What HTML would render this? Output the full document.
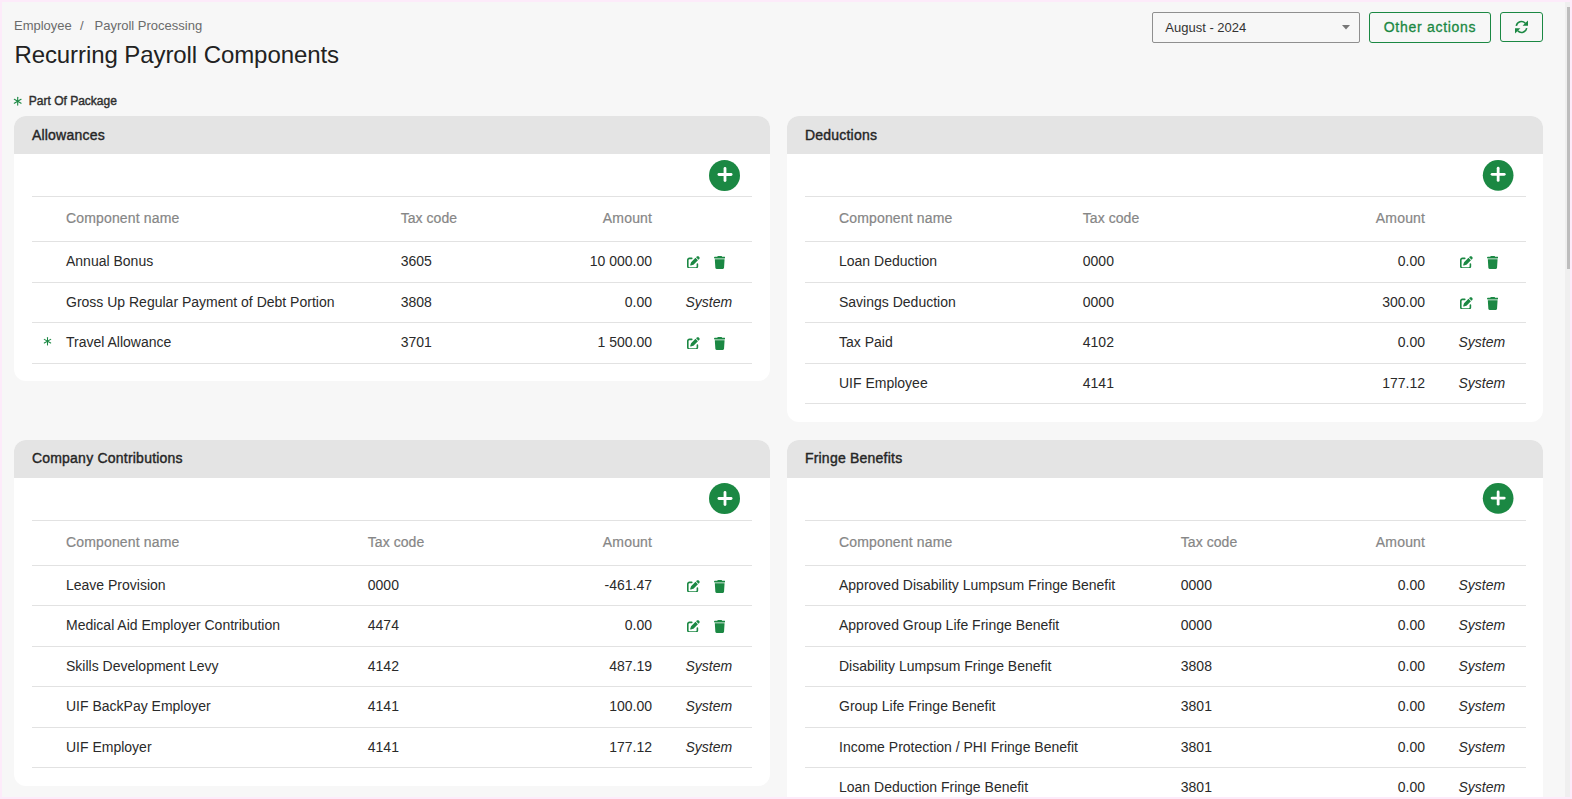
<!DOCTYPE html><html><head><meta charset="utf-8"><style>
html,body{margin:0;padding:0;}
body{width:1572px;height:799px;overflow:hidden;background:#fdebfa;position:relative;font-family:"Liberation Sans",sans-serif;}
.vp{position:absolute;left:2px;top:2px;width:1568px;height:795px;background:#f7f7f7;overflow:hidden;}
.abs{position:absolute;left:0;top:0;width:1572px;height:799px;}
.t{position:absolute;white-space:nowrap;}
.i{position:absolute;}
.card{position:absolute;background:#fff;border-radius:12px;overflow:hidden;}
.ch{position:absolute;background:#e4e4e4;border-radius:12px 12px 0 0;}
.hl{position:absolute;height:1px;}
.pb{position:absolute;border-radius:50%;background:#1b8843;}
</style></head><body><div class="vp"><div class="abs" style="left:-2px;top:-2px">
<div class="t" style="top:15.90px;font-size:13px;line-height:20px;color:#6b6b6b;left:14.00px;">Employee</div>
<div class="t" style="top:15.90px;font-size:13px;line-height:20px;color:#6b6b6b;left:80.00px;">/</div>
<div class="t" style="top:15.90px;font-size:13px;line-height:20px;color:#6b6b6b;left:94.50px;">Payroll Processing</div>
<div class="t" style="top:39.58px;font-size:24px;line-height:30px;color:#222;letter-spacing:-0.08px;left:14.40px;">Recurring Payroll Components</div>
<svg class="i" style="left:0;top:0;width:1572px;height:799px;overflow:visible" viewBox="0 0 1572 799"><g stroke="#1b8843" stroke-width="1.1" stroke-linecap="round"><line x1="17.70" y1="97.30" x2="17.70" y2="105.10"/><line x1="14.32" y1="99.25" x2="21.08" y2="103.15"/><line x1="21.08" y1="99.25" x2="14.32" y2="103.15"/></g></svg>
<div class="t" style="top:90.54px;font-size:12px;line-height:20px;color:#2e2e2e;left:28.80px;-webkit-text-stroke:0.4px #2e2e2e;">Part Of Package</div>
<div style="position:absolute;left:1152px;top:12px;width:206px;height:29px;border:1px solid #8f8f8f;border-radius:2px;"></div>
<div class="t" style="top:17.60px;font-size:13px;line-height:20px;color:#333;left:1165.30px;">August - 2024</div>
<svg class="i" style="left:1342px;top:25px;width:8px;height:5px" viewBox="0 0 8 5"><path d="M0 0H8L4 4.6Z" fill="#777"/></svg>
<div style="position:absolute;left:1369px;top:12px;width:120px;height:29px;border:1px solid #1b8843;border-radius:3px;"></div>
<div class="t" style="top:17.05px;font-size:14px;line-height:20px;color:#1b8843;letter-spacing:0.72px;left:1383.70px;-webkit-text-stroke:0.3px #1b8843;">Other actions</div>
<div style="position:absolute;left:1500px;top:12px;width:41px;height:28px;border:1px solid #1b8843;border-radius:3px;"></div>
<svg class="i" style="left:1514.5px;top:21px;width:13px;height:12px;overflow:visible" viewBox="0 0 13 12"><g><path d="M1.3 4.9A5.3 5.3 0 0 1 10.2 2.1" fill="none" stroke="#1b8843" stroke-width="1.6"/><path d="M7.6 4.7H13V-0.6Z" fill="#1b8843"/></g><g transform="rotate(180 6.5 6)"><path d="M1.3 4.9A5.3 5.3 0 0 1 10.2 2.1" fill="none" stroke="#1b8843" stroke-width="1.6"/><path d="M7.6 4.7H13V-0.6Z" fill="#1b8843"/></g></svg>
<div class="card" style="left:14px;top:116px;width:756px;height:265px"></div>
<div class="ch" style="left:14px;top:116px;width:756px;height:38px"></div>
<div class="t" style="top:124.85px;font-size:14px;line-height:20px;color:#262626;letter-spacing:0.22px;left:31.90px;-webkit-text-stroke:0.4px #262626;">Allowances</div>
<svg class="i" style="left:707px;top:158px;width:36px;height:36px" viewBox="0 0 36 36"><circle cx="17.50" cy="17.50" r="15.50" fill="#1b8843"/><g stroke="#fff" stroke-width="2.8" stroke-linecap="round"><line x1="18.00" y1="10.40" x2="18.00" y2="22.60"/><line x1="11.90" y1="16.50" x2="24.10" y2="16.50"/></g></svg>
<div class="hl" style="left:32px;top:196px;width:720px;background:#e2e2e2"></div>
<div class="hl" style="left:32px;top:241px;width:720px;background:#e2e2e2"></div>
<div class="hl" style="left:32px;top:282px;width:720px;background:#e2e2e2"></div>
<div class="hl" style="left:32px;top:322px;width:720px;background:#e2e2e2"></div>
<div class="hl" style="left:32px;top:363px;width:720px;background:#e2e2e2"></div>
<div class="t" style="top:207.65px;font-size:14px;line-height:20px;color:#868686;letter-spacing:0.15px;left:66.00px;-webkit-text-stroke:0.2px #868686;">Component name</div>
<div class="t" style="top:207.65px;font-size:14px;line-height:20px;color:#868686;letter-spacing:0.05px;left:400.70px;-webkit-text-stroke:0.2px #868686;">Tax code</div>
<div class="t" style="top:207.65px;font-size:14px;line-height:20px;color:#868686;letter-spacing:0.2px;right:919.80px;-webkit-text-stroke:0.2px #868686;">Amount</div>
<div class="t" style="top:251.15px;font-size:14px;line-height:20px;color:#2a2a2a;left:66.00px;">Annual Bonus</div>
<div class="t" style="top:251.15px;font-size:14px;line-height:20px;color:#2a2a2a;left:400.70px;">3605</div>
<div class="t" style="top:251.15px;font-size:14px;line-height:20px;color:#2a2a2a;right:920.00px;">10 000.00</div>
<svg class="i" style="left:687px;top:255.5px;width:12.8px;height:12.8px" viewBox="0 0 512 512" preserveAspectRatio="none"><path fill="#1b8843" d="M471.6 21.7c-21.9-21.9-57.3-21.9-79.2 0L362.3 51.7l97.9 97.9 30.1-30.1c21.9-21.9 21.9-57.3 0-79.2L471.6 21.7zm-299.2 220c-6.1 6.1-10.8 13.6-13.5 21.9l-29.6 88.8c-2.9 8.6-.6 18.1 5.8 24.6s15.9 8.7 24.6 5.8l88.8-29.6c8.2-2.7 15.7-7.4 21.9-13.5L437.7 172.3 339.7 74.3 172.4 241.7zM96 64C43 64 0 107 0 160V416c0 53 43 96 96 96H352c53 0 96-43 96-96V320c0-17.7-14.3-32-32-32s-32 14.3-32 32v96c0 17.7-14.3 32-32 32H96c-17.7 0-32-14.3-32-32V160c0-17.7 14.3-32 32-32h96c17.7 0 32-14.3 32-32s-14.3-32-32-32H96z"/></svg>
<svg class="i" style="left:713.6px;top:255.6px;width:11.4px;height:13.0px" viewBox="0 0 448 512" preserveAspectRatio="none"><path fill="#1b8843" d="M135.2 17.7L128 32H32C14.3 32 0 46.3 0 64S14.3 96 32 96H416c17.7 0 32-14.3 32-32s-14.3-32-32-32H320l-7.2-14.3C307.4 6.8 296.3 0 284.2 0H163.8c-12.1 0-23.2 6.8-28.6 17.7zM416 128H32L53.2 467c1.6 25.3 22.6 45 47.9 45H346.9c25.3 0 46.3-19.7 47.9-45L416 128z"/></svg>
<div class="t" style="top:292.15px;font-size:14px;line-height:20px;color:#2a2a2a;left:66.00px;">Gross Up Regular Payment of Debt Portion</div>
<div class="t" style="top:292.15px;font-size:14px;line-height:20px;color:#2a2a2a;left:400.70px;">3808</div>
<div class="t" style="top:292.15px;font-size:14px;line-height:20px;color:#2a2a2a;right:920.00px;">0.00</div>
<div class="t" style="top:292.15px;font-size:14px;line-height:20px;color:#2a2a2a;font-style:italic;left:685.50px;">System</div>
<svg class="i" style="left:0;top:0;width:1572px;height:799px;overflow:visible" viewBox="0 0 1572 799"><g stroke="#1b8843" stroke-width="1.05" stroke-linecap="round"><line x1="47.50" y1="337.50" x2="47.50" y2="344.90"/><line x1="44.30" y1="339.35" x2="50.70" y2="343.05"/><line x1="50.70" y1="339.35" x2="44.30" y2="343.05"/></g></svg>
<div class="t" style="top:332.15px;font-size:14px;line-height:20px;color:#2a2a2a;left:66.00px;">Travel Allowance</div>
<div class="t" style="top:332.15px;font-size:14px;line-height:20px;color:#2a2a2a;left:400.70px;">3701</div>
<div class="t" style="top:332.15px;font-size:14px;line-height:20px;color:#2a2a2a;right:920.00px;">1 500.00</div>
<svg class="i" style="left:687px;top:336.5px;width:12.8px;height:12.8px" viewBox="0 0 512 512" preserveAspectRatio="none"><path fill="#1b8843" d="M471.6 21.7c-21.9-21.9-57.3-21.9-79.2 0L362.3 51.7l97.9 97.9 30.1-30.1c21.9-21.9 21.9-57.3 0-79.2L471.6 21.7zm-299.2 220c-6.1 6.1-10.8 13.6-13.5 21.9l-29.6 88.8c-2.9 8.6-.6 18.1 5.8 24.6s15.9 8.7 24.6 5.8l88.8-29.6c8.2-2.7 15.7-7.4 21.9-13.5L437.7 172.3 339.7 74.3 172.4 241.7zM96 64C43 64 0 107 0 160V416c0 53 43 96 96 96H352c53 0 96-43 96-96V320c0-17.7-14.3-32-32-32s-32 14.3-32 32v96c0 17.7-14.3 32-32 32H96c-17.7 0-32-14.3-32-32V160c0-17.7 14.3-32 32-32h96c17.7 0 32-14.3 32-32s-14.3-32-32-32H96z"/></svg>
<svg class="i" style="left:713.6px;top:336.6px;width:11.4px;height:13.0px" viewBox="0 0 448 512" preserveAspectRatio="none"><path fill="#1b8843" d="M135.2 17.7L128 32H32C14.3 32 0 46.3 0 64S14.3 96 32 96H416c17.7 0 32-14.3 32-32s-14.3-32-32-32H320l-7.2-14.3C307.4 6.8 296.3 0 284.2 0H163.8c-12.1 0-23.2 6.8-28.6 17.7zM416 128H32L53.2 467c1.6 25.3 22.6 45 47.9 45H346.9c25.3 0 46.3-19.7 47.9-45L416 128z"/></svg>
<div class="card" style="left:787px;top:116px;width:756px;height:305.5px"></div>
<div class="ch" style="left:787px;top:116px;width:756px;height:38px"></div>
<div class="t" style="top:124.85px;font-size:14px;line-height:20px;color:#262626;letter-spacing:0.22px;left:804.90px;-webkit-text-stroke:0.4px #262626;">Deductions</div>
<svg class="i" style="left:1480px;top:158px;width:36px;height:36px" viewBox="0 0 36 36"><circle cx="18.15" cy="17.35" r="15.35" fill="#1b8843"/><g stroke="#fff" stroke-width="2.8" stroke-linecap="round"><line x1="18.15" y1="10.25" x2="18.15" y2="22.45"/><line x1="12.05" y1="16.35" x2="24.25" y2="16.35"/></g></svg>
<div class="hl" style="left:805px;top:196px;width:721px;background:#e2e2e2"></div>
<div class="hl" style="left:805px;top:241px;width:721px;background:#e2e2e2"></div>
<div class="hl" style="left:805px;top:282px;width:721px;background:#e2e2e2"></div>
<div class="hl" style="left:805px;top:322px;width:721px;background:#e2e2e2"></div>
<div class="hl" style="left:805px;top:363px;width:721px;background:#e2e2e2"></div>
<div class="hl" style="left:805px;top:403px;width:721px;background:#e2e2e2"></div>
<div class="t" style="top:207.65px;font-size:14px;line-height:20px;color:#868686;letter-spacing:0.15px;left:839.00px;-webkit-text-stroke:0.2px #868686;">Component name</div>
<div class="t" style="top:207.65px;font-size:14px;line-height:20px;color:#868686;letter-spacing:0.05px;left:1082.80px;-webkit-text-stroke:0.2px #868686;">Tax code</div>
<div class="t" style="top:207.65px;font-size:14px;line-height:20px;color:#868686;letter-spacing:0.2px;right:146.80px;-webkit-text-stroke:0.2px #868686;">Amount</div>
<div class="t" style="top:251.15px;font-size:14px;line-height:20px;color:#2a2a2a;left:839.00px;">Loan Deduction</div>
<div class="t" style="top:251.15px;font-size:14px;line-height:20px;color:#2a2a2a;left:1082.80px;">0000</div>
<div class="t" style="top:251.15px;font-size:14px;line-height:20px;color:#2a2a2a;right:147.00px;">0.00</div>
<svg class="i" style="left:1460px;top:255.5px;width:12.8px;height:12.8px" viewBox="0 0 512 512" preserveAspectRatio="none"><path fill="#1b8843" d="M471.6 21.7c-21.9-21.9-57.3-21.9-79.2 0L362.3 51.7l97.9 97.9 30.1-30.1c21.9-21.9 21.9-57.3 0-79.2L471.6 21.7zm-299.2 220c-6.1 6.1-10.8 13.6-13.5 21.9l-29.6 88.8c-2.9 8.6-.6 18.1 5.8 24.6s15.9 8.7 24.6 5.8l88.8-29.6c8.2-2.7 15.7-7.4 21.9-13.5L437.7 172.3 339.7 74.3 172.4 241.7zM96 64C43 64 0 107 0 160V416c0 53 43 96 96 96H352c53 0 96-43 96-96V320c0-17.7-14.3-32-32-32s-32 14.3-32 32v96c0 17.7-14.3 32-32 32H96c-17.7 0-32-14.3-32-32V160c0-17.7 14.3-32 32-32h96c17.7 0 32-14.3 32-32s-14.3-32-32-32H96z"/></svg>
<svg class="i" style="left:1486.6px;top:255.6px;width:11.4px;height:13.0px" viewBox="0 0 448 512" preserveAspectRatio="none"><path fill="#1b8843" d="M135.2 17.7L128 32H32C14.3 32 0 46.3 0 64S14.3 96 32 96H416c17.7 0 32-14.3 32-32s-14.3-32-32-32H320l-7.2-14.3C307.4 6.8 296.3 0 284.2 0H163.8c-12.1 0-23.2 6.8-28.6 17.7zM416 128H32L53.2 467c1.6 25.3 22.6 45 47.9 45H346.9c25.3 0 46.3-19.7 47.9-45L416 128z"/></svg>
<div class="t" style="top:292.15px;font-size:14px;line-height:20px;color:#2a2a2a;left:839.00px;">Savings Deduction</div>
<div class="t" style="top:292.15px;font-size:14px;line-height:20px;color:#2a2a2a;left:1082.80px;">0000</div>
<div class="t" style="top:292.15px;font-size:14px;line-height:20px;color:#2a2a2a;right:147.00px;">300.00</div>
<svg class="i" style="left:1460px;top:296.5px;width:12.8px;height:12.8px" viewBox="0 0 512 512" preserveAspectRatio="none"><path fill="#1b8843" d="M471.6 21.7c-21.9-21.9-57.3-21.9-79.2 0L362.3 51.7l97.9 97.9 30.1-30.1c21.9-21.9 21.9-57.3 0-79.2L471.6 21.7zm-299.2 220c-6.1 6.1-10.8 13.6-13.5 21.9l-29.6 88.8c-2.9 8.6-.6 18.1 5.8 24.6s15.9 8.7 24.6 5.8l88.8-29.6c8.2-2.7 15.7-7.4 21.9-13.5L437.7 172.3 339.7 74.3 172.4 241.7zM96 64C43 64 0 107 0 160V416c0 53 43 96 96 96H352c53 0 96-43 96-96V320c0-17.7-14.3-32-32-32s-32 14.3-32 32v96c0 17.7-14.3 32-32 32H96c-17.7 0-32-14.3-32-32V160c0-17.7 14.3-32 32-32h96c17.7 0 32-14.3 32-32s-14.3-32-32-32H96z"/></svg>
<svg class="i" style="left:1486.6px;top:296.6px;width:11.4px;height:13.0px" viewBox="0 0 448 512" preserveAspectRatio="none"><path fill="#1b8843" d="M135.2 17.7L128 32H32C14.3 32 0 46.3 0 64S14.3 96 32 96H416c17.7 0 32-14.3 32-32s-14.3-32-32-32H320l-7.2-14.3C307.4 6.8 296.3 0 284.2 0H163.8c-12.1 0-23.2 6.8-28.6 17.7zM416 128H32L53.2 467c1.6 25.3 22.6 45 47.9 45H346.9c25.3 0 46.3-19.7 47.9-45L416 128z"/></svg>
<div class="t" style="top:332.15px;font-size:14px;line-height:20px;color:#2a2a2a;left:839.00px;">Tax Paid</div>
<div class="t" style="top:332.15px;font-size:14px;line-height:20px;color:#2a2a2a;left:1082.80px;">4102</div>
<div class="t" style="top:332.15px;font-size:14px;line-height:20px;color:#2a2a2a;right:147.00px;">0.00</div>
<div class="t" style="top:332.15px;font-size:14px;line-height:20px;color:#2a2a2a;font-style:italic;left:1458.50px;">System</div>
<div class="t" style="top:373.15px;font-size:14px;line-height:20px;color:#2a2a2a;left:839.00px;">UIF Employee</div>
<div class="t" style="top:373.15px;font-size:14px;line-height:20px;color:#2a2a2a;left:1082.80px;">4141</div>
<div class="t" style="top:373.15px;font-size:14px;line-height:20px;color:#2a2a2a;right:147.00px;">177.12</div>
<div class="t" style="top:373.15px;font-size:14px;line-height:20px;color:#2a2a2a;font-style:italic;left:1458.50px;">System</div>
<div class="card" style="left:14px;top:440px;width:756px;height:345.5px"></div>
<div class="ch" style="left:14px;top:440px;width:756px;height:38px"></div>
<div class="t" style="top:448.05px;font-size:14px;line-height:20px;color:#262626;letter-spacing:0.22px;left:31.90px;-webkit-text-stroke:0.4px #262626;">Company Contributions</div>
<svg class="i" style="left:707px;top:481px;width:36px;height:36px" viewBox="0 0 36 36"><circle cx="17.50" cy="17.50" r="15.50" fill="#1b8843"/><g stroke="#fff" stroke-width="2.8" stroke-linecap="round"><line x1="18.00" y1="11.40" x2="18.00" y2="23.60"/><line x1="11.90" y1="17.50" x2="24.10" y2="17.50"/></g></svg>
<div class="hl" style="left:32px;top:520px;width:720px;background:#e2e2e2"></div>
<div class="hl" style="left:32px;top:565px;width:720px;background:#e2e2e2"></div>
<div class="hl" style="left:32px;top:605px;width:720px;background:#e2e2e2"></div>
<div class="hl" style="left:32px;top:646px;width:720px;background:#e2e2e2"></div>
<div class="hl" style="left:32px;top:686px;width:720px;background:#e2e2e2"></div>
<div class="hl" style="left:32px;top:727px;width:720px;background:#e2e2e2"></div>
<div class="hl" style="left:32px;top:767px;width:720px;background:#e2e2e2"></div>
<div class="t" style="top:531.65px;font-size:14px;line-height:20px;color:#868686;letter-spacing:0.15px;left:66.00px;-webkit-text-stroke:0.2px #868686;">Component name</div>
<div class="t" style="top:531.65px;font-size:14px;line-height:20px;color:#868686;letter-spacing:0.05px;left:367.80px;-webkit-text-stroke:0.2px #868686;">Tax code</div>
<div class="t" style="top:531.65px;font-size:14px;line-height:20px;color:#868686;letter-spacing:0.2px;right:919.80px;-webkit-text-stroke:0.2px #868686;">Amount</div>
<div class="t" style="top:575.15px;font-size:14px;line-height:20px;color:#2a2a2a;left:66.00px;">Leave Provision</div>
<div class="t" style="top:575.15px;font-size:14px;line-height:20px;color:#2a2a2a;left:367.80px;">0000</div>
<div class="t" style="top:575.15px;font-size:14px;line-height:20px;color:#2a2a2a;right:920.00px;">-461.47</div>
<svg class="i" style="left:687px;top:579.5px;width:12.8px;height:12.8px" viewBox="0 0 512 512" preserveAspectRatio="none"><path fill="#1b8843" d="M471.6 21.7c-21.9-21.9-57.3-21.9-79.2 0L362.3 51.7l97.9 97.9 30.1-30.1c21.9-21.9 21.9-57.3 0-79.2L471.6 21.7zm-299.2 220c-6.1 6.1-10.8 13.6-13.5 21.9l-29.6 88.8c-2.9 8.6-.6 18.1 5.8 24.6s15.9 8.7 24.6 5.8l88.8-29.6c8.2-2.7 15.7-7.4 21.9-13.5L437.7 172.3 339.7 74.3 172.4 241.7zM96 64C43 64 0 107 0 160V416c0 53 43 96 96 96H352c53 0 96-43 96-96V320c0-17.7-14.3-32-32-32s-32 14.3-32 32v96c0 17.7-14.3 32-32 32H96c-17.7 0-32-14.3-32-32V160c0-17.7 14.3-32 32-32h96c17.7 0 32-14.3 32-32s-14.3-32-32-32H96z"/></svg>
<svg class="i" style="left:713.6px;top:579.6px;width:11.4px;height:13.0px" viewBox="0 0 448 512" preserveAspectRatio="none"><path fill="#1b8843" d="M135.2 17.7L128 32H32C14.3 32 0 46.3 0 64S14.3 96 32 96H416c17.7 0 32-14.3 32-32s-14.3-32-32-32H320l-7.2-14.3C307.4 6.8 296.3 0 284.2 0H163.8c-12.1 0-23.2 6.8-28.6 17.7zM416 128H32L53.2 467c1.6 25.3 22.6 45 47.9 45H346.9c25.3 0 46.3-19.7 47.9-45L416 128z"/></svg>
<div class="t" style="top:615.15px;font-size:14px;line-height:20px;color:#2a2a2a;left:66.00px;">Medical Aid Employer Contribution</div>
<div class="t" style="top:615.15px;font-size:14px;line-height:20px;color:#2a2a2a;left:367.80px;">4474</div>
<div class="t" style="top:615.15px;font-size:14px;line-height:20px;color:#2a2a2a;right:920.00px;">0.00</div>
<svg class="i" style="left:687px;top:619.5px;width:12.8px;height:12.8px" viewBox="0 0 512 512" preserveAspectRatio="none"><path fill="#1b8843" d="M471.6 21.7c-21.9-21.9-57.3-21.9-79.2 0L362.3 51.7l97.9 97.9 30.1-30.1c21.9-21.9 21.9-57.3 0-79.2L471.6 21.7zm-299.2 220c-6.1 6.1-10.8 13.6-13.5 21.9l-29.6 88.8c-2.9 8.6-.6 18.1 5.8 24.6s15.9 8.7 24.6 5.8l88.8-29.6c8.2-2.7 15.7-7.4 21.9-13.5L437.7 172.3 339.7 74.3 172.4 241.7zM96 64C43 64 0 107 0 160V416c0 53 43 96 96 96H352c53 0 96-43 96-96V320c0-17.7-14.3-32-32-32s-32 14.3-32 32v96c0 17.7-14.3 32-32 32H96c-17.7 0-32-14.3-32-32V160c0-17.7 14.3-32 32-32h96c17.7 0 32-14.3 32-32s-14.3-32-32-32H96z"/></svg>
<svg class="i" style="left:713.6px;top:619.6px;width:11.4px;height:13.0px" viewBox="0 0 448 512" preserveAspectRatio="none"><path fill="#1b8843" d="M135.2 17.7L128 32H32C14.3 32 0 46.3 0 64S14.3 96 32 96H416c17.7 0 32-14.3 32-32s-14.3-32-32-32H320l-7.2-14.3C307.4 6.8 296.3 0 284.2 0H163.8c-12.1 0-23.2 6.8-28.6 17.7zM416 128H32L53.2 467c1.6 25.3 22.6 45 47.9 45H346.9c25.3 0 46.3-19.7 47.9-45L416 128z"/></svg>
<div class="t" style="top:656.15px;font-size:14px;line-height:20px;color:#2a2a2a;left:66.00px;">Skills Development Levy</div>
<div class="t" style="top:656.15px;font-size:14px;line-height:20px;color:#2a2a2a;left:367.80px;">4142</div>
<div class="t" style="top:656.15px;font-size:14px;line-height:20px;color:#2a2a2a;right:920.00px;">487.19</div>
<div class="t" style="top:656.15px;font-size:14px;line-height:20px;color:#2a2a2a;font-style:italic;left:685.50px;">System</div>
<div class="t" style="top:696.15px;font-size:14px;line-height:20px;color:#2a2a2a;left:66.00px;">UIF BackPay Employer</div>
<div class="t" style="top:696.15px;font-size:14px;line-height:20px;color:#2a2a2a;left:367.80px;">4141</div>
<div class="t" style="top:696.15px;font-size:14px;line-height:20px;color:#2a2a2a;right:920.00px;">100.00</div>
<div class="t" style="top:696.15px;font-size:14px;line-height:20px;color:#2a2a2a;font-style:italic;left:685.50px;">System</div>
<div class="t" style="top:737.15px;font-size:14px;line-height:20px;color:#2a2a2a;left:66.00px;">UIF Employer</div>
<div class="t" style="top:737.15px;font-size:14px;line-height:20px;color:#2a2a2a;left:367.80px;">4141</div>
<div class="t" style="top:737.15px;font-size:14px;line-height:20px;color:#2a2a2a;right:920.00px;">177.12</div>
<div class="t" style="top:737.15px;font-size:14px;line-height:20px;color:#2a2a2a;font-style:italic;left:685.50px;">System</div>
<div class="card" style="left:787px;top:440px;width:756px;height:460px"></div>
<div class="ch" style="left:787px;top:440px;width:756px;height:38px"></div>
<div class="t" style="top:448.05px;font-size:14px;line-height:20px;color:#262626;letter-spacing:0.22px;left:804.90px;-webkit-text-stroke:0.4px #262626;">Fringe Benefits</div>
<svg class="i" style="left:1480px;top:481px;width:36px;height:36px" viewBox="0 0 36 36"><circle cx="18.15" cy="17.35" r="15.35" fill="#1b8843"/><g stroke="#fff" stroke-width="2.8" stroke-linecap="round"><line x1="18.15" y1="10.95" x2="18.15" y2="23.15"/><line x1="12.05" y1="17.05" x2="24.25" y2="17.05"/></g></svg>
<div class="hl" style="left:805px;top:520px;width:721px;background:#e2e2e2"></div>
<div class="hl" style="left:805px;top:565px;width:721px;background:#e2e2e2"></div>
<div class="hl" style="left:805px;top:605px;width:721px;background:#e2e2e2"></div>
<div class="hl" style="left:805px;top:646px;width:721px;background:#e2e2e2"></div>
<div class="hl" style="left:805px;top:686px;width:721px;background:#e2e2e2"></div>
<div class="hl" style="left:805px;top:727px;width:721px;background:#e2e2e2"></div>
<div class="hl" style="left:805px;top:767px;width:721px;background:#e2e2e2"></div>
<div class="hl" style="left:805px;top:808px;width:721px;background:#e2e2e2"></div>
<div class="t" style="top:531.65px;font-size:14px;line-height:20px;color:#868686;letter-spacing:0.15px;left:839.00px;-webkit-text-stroke:0.2px #868686;">Component name</div>
<div class="t" style="top:531.65px;font-size:14px;line-height:20px;color:#868686;letter-spacing:0.05px;left:1180.80px;-webkit-text-stroke:0.2px #868686;">Tax code</div>
<div class="t" style="top:531.65px;font-size:14px;line-height:20px;color:#868686;letter-spacing:0.2px;right:146.80px;-webkit-text-stroke:0.2px #868686;">Amount</div>
<div class="t" style="top:575.15px;font-size:14px;line-height:20px;color:#2a2a2a;left:839.00px;">Approved Disability Lumpsum Fringe Benefit</div>
<div class="t" style="top:575.15px;font-size:14px;line-height:20px;color:#2a2a2a;left:1180.80px;">0000</div>
<div class="t" style="top:575.15px;font-size:14px;line-height:20px;color:#2a2a2a;right:147.00px;">0.00</div>
<div class="t" style="top:575.15px;font-size:14px;line-height:20px;color:#2a2a2a;font-style:italic;left:1458.50px;">System</div>
<div class="t" style="top:615.15px;font-size:14px;line-height:20px;color:#2a2a2a;left:839.00px;">Approved Group Life Fringe Benefit</div>
<div class="t" style="top:615.15px;font-size:14px;line-height:20px;color:#2a2a2a;left:1180.80px;">0000</div>
<div class="t" style="top:615.15px;font-size:14px;line-height:20px;color:#2a2a2a;right:147.00px;">0.00</div>
<div class="t" style="top:615.15px;font-size:14px;line-height:20px;color:#2a2a2a;font-style:italic;left:1458.50px;">System</div>
<div class="t" style="top:656.15px;font-size:14px;line-height:20px;color:#2a2a2a;left:839.00px;">Disability Lumpsum Fringe Benefit</div>
<div class="t" style="top:656.15px;font-size:14px;line-height:20px;color:#2a2a2a;left:1180.80px;">3808</div>
<div class="t" style="top:656.15px;font-size:14px;line-height:20px;color:#2a2a2a;right:147.00px;">0.00</div>
<div class="t" style="top:656.15px;font-size:14px;line-height:20px;color:#2a2a2a;font-style:italic;left:1458.50px;">System</div>
<div class="t" style="top:696.15px;font-size:14px;line-height:20px;color:#2a2a2a;left:839.00px;">Group Life Fringe Benefit</div>
<div class="t" style="top:696.15px;font-size:14px;line-height:20px;color:#2a2a2a;left:1180.80px;">3801</div>
<div class="t" style="top:696.15px;font-size:14px;line-height:20px;color:#2a2a2a;right:147.00px;">0.00</div>
<div class="t" style="top:696.15px;font-size:14px;line-height:20px;color:#2a2a2a;font-style:italic;left:1458.50px;">System</div>
<div class="t" style="top:737.15px;font-size:14px;line-height:20px;color:#2a2a2a;left:839.00px;">Income Protection / PHI Fringe Benefit</div>
<div class="t" style="top:737.15px;font-size:14px;line-height:20px;color:#2a2a2a;left:1180.80px;">3801</div>
<div class="t" style="top:737.15px;font-size:14px;line-height:20px;color:#2a2a2a;right:147.00px;">0.00</div>
<div class="t" style="top:737.15px;font-size:14px;line-height:20px;color:#2a2a2a;font-style:italic;left:1458.50px;">System</div>
<div class="t" style="top:777.15px;font-size:14px;line-height:20px;color:#2a2a2a;left:839.00px;">Loan Deduction Fringe Benefit</div>
<div class="t" style="top:777.15px;font-size:14px;line-height:20px;color:#2a2a2a;left:1180.80px;">3801</div>
<div class="t" style="top:777.15px;font-size:14px;line-height:20px;color:#2a2a2a;right:147.00px;">0.00</div>
<div class="t" style="top:777.15px;font-size:14px;line-height:20px;color:#2a2a2a;font-style:italic;left:1458.50px;">System</div>
<div class="t" style="top:818.15px;font-size:14px;line-height:20px;color:#2a2a2a;left:839.00px;">Lorem</div>
<div class="t" style="top:818.15px;font-size:14px;line-height:20px;color:#2a2a2a;left:1180.80px;">3801</div>
<div class="t" style="top:818.15px;font-size:14px;line-height:20px;color:#2a2a2a;right:147.00px;">0.00</div>
<div class="t" style="top:818.15px;font-size:14px;line-height:20px;color:#2a2a2a;font-style:italic;left:1458.50px;">System</div>
<div style="position:absolute;left:1565px;top:2px;width:5px;height:795px;background:#efefef"></div>
<div style="position:absolute;left:1567px;top:7px;width:3px;height:262px;background:#bdbdbd"></div>
</div></div></body></html>
